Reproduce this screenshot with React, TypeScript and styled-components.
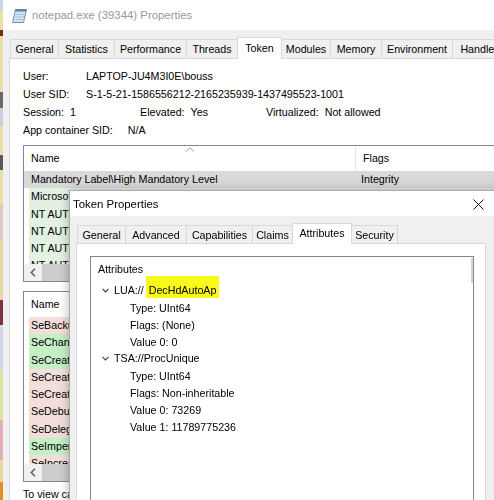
import React from "react";
import styled, { createGlobalStyle } from "styled-components";

const FONT = `"Liberation Sans", Arial, sans-serif`;

const Global = createGlobalStyle`
  html, body { margin: 0; padding: 0; }
  body {
    width: 494px;
    height: 500px;
    overflow: hidden;
    background: #f0f0f0;
    font-family: ${FONT};
  }
`;

const Screen = styled.div`
  position: relative;
  width: 494px;
  height: 500px;
  overflow: hidden;
  display: flex;
  font-family: ${FONT};
  font-size: 10.7px;
  color: #000;
`;

const DesktopStrip = styled.div`
  flex: none;
  width: 3px;
  background: linear-gradient(
    to bottom,
    #c8d8e8 0px, #c8d8e8 10px,
    #e8e0a8 10px, #e8e0a8 30px,
    #7a2a2a 30px, #7a2a2a 36px,
    #e8e0a8 36px, #e8e0a8 92px,
    #6a6a6a 92px, #6a6a6a 108px,
    #c8d0e0 108px, #c8d0e0 126px,
    #e8e0a8 126px, #e8e0a8 155px,
    #5a5a5a 155px, #5a5a5a 170px,
    #e8e0a8 170px, #e8e0a8 205px,
    #e2c4c4 205px, #e2c4c4 240px,
    #e8d8a8 240px, #e8d8a8 300px,
    #803040 300px, #803040 325px,
    #d0d8e8 325px, #d0d8e8 370px,
    #e0e0a0 370px, #e0e0a0 420px,
    #e0b0b8 420px, #e0b0b8 460px,
    #e8d8a0 460px, #e8d8a0 482px,
    #e09020 482px, #e09020 500px
  );
`;

const Window = styled.div`
  flex: none;
  width: 530px;
  display: flex;
  flex-direction: column;
  background: #f0f0f0;
`;

const TitleBar = styled.div`
  flex: none;
  height: 30px;
  background: #fff;
  display: flex;
  align-items: center;
  gap: 5px;
  padding-left: 8px;
`;

const TitleText = styled.span<{ $inactive?: boolean }>`
  font-size: 11.4px;
  color: ${(p) => (p.$inactive ? "#999999" : "#000000")};
  white-space: nowrap;
`;

const WindowBody = styled.div`
  flex: 1;
  display: flex;
  flex-direction: column;
  padding: 7px 0 0 6px;
`;

const TabStrip = styled.div`
  flex: none;
  display: flex;
  align-items: flex-end;
  padding-left: 1px;
`;

const Tab = styled.div<{ $w: number; $h: number; $active?: boolean }>`
  box-sizing: border-box;
  flex: none;
  position: relative;
  z-index: ${(p) => (p.$active ? 2 : 1)};
  width: ${(p) => p.$w}px;
  height: ${(p) => (p.$active ? p.$h + 3 : p.$h)}px;
  margin-right: -1px;
  margin-bottom: ${(p) => (p.$active ? -1 : 0)}px;
  padding-bottom: ${(p) => (p.$active ? 2 : 0)}px;
  border: 1px solid #d9d9d9;
  border-bottom: none;
  background: ${(p) => (p.$active ? "#ffffff" : "#f0f0f0")};
  display: flex;
  align-items: center;
  justify-content: center;
  white-space: nowrap;
`;

const TabPanel = styled.div`
  flex: 1;
  display: flex;
  flex-direction: column;
  background: #fff;
  border: 1px solid #d9d9d9;
  padding: 8px 13px 0 13px;
`;

const InfoRow = styled.div`
  display: flex;
  height: 18px;
  align-items: center;
  white-space: nowrap;
`;

const Field = styled.div<{ $w?: number }>`
  display: flex;
  gap: 6px;
  flex: none;
  width: ${(p) => (p.$w ? `${p.$w}px` : "auto")};
`;

const Label = styled.span<{ $w?: number }>`
  flex: none;
  width: ${(p) => (p.$w ? `${p.$w}px` : "auto")};
`;

const ListView = styled.div<{ $h: number; $mt: number }>`
  flex: none;
  box-sizing: border-box;
  height: ${(p) => p.$h}px;
  margin-top: ${(p) => p.$mt}px;
  border: 1px solid #828790;
  background: #fff;
  display: flex;
  flex-direction: column;
  overflow: hidden;
`;

const ListHeader = styled.div`
  flex: none;
  height: 25px;
  display: flex;
`;

const HeaderCell = styled.div<{ $w?: number }>`
  position: relative;
  flex: none;
  box-sizing: border-box;
  width: ${(p) => (p.$w ? `${p.$w}px` : "auto")};
  padding-left: 7px;
  line-height: 25px;
  border-right: ${(p) => (p.$w ? "1px solid #e5e5e5" : "none")};
`;

const SortArrow = styled.svg`
  position: absolute;
  top: 1px;
  left: 50%;
  transform: translateX(-50%);
`;

const ListBody = styled.div`
  flex: 1;
  overflow: hidden;
`;

const ListRow = styled.div<{ $bg: string; $sel?: boolean }>`
  height: 17.3px;
  line-height: 17.3px;
  display: flex;
  white-space: nowrap;
  margin-left: ${(p) => (p.$sel ? 0 : 5)}px;
  padding-left: ${(p) => (p.$sel ? 7 : 2)}px;
  background: ${(p) => p.$bg};
`;

const Cell = styled.div<{ $w?: number }>`
  flex: none;
  overflow: hidden;
  width: ${(p) => (p.$w ? `${p.$w}px` : "auto")};
  padding-left: ${(p) => (p.$w ? 0 : 6)}px;
`;

const HScroll = styled.div`
  flex: none;
  height: 17px;
  display: flex;
  background: #f0f0f0;
`;

const ScrollButton = styled.div`
  flex: none;
  width: 17px;
  display: flex;
  align-items: center;
  justify-content: center;
`;

const ScrollThumb = styled.div`
  flex: none;
  width: 220px;
  margin-left: 1px;
  background: #cdcdcd;
`;

const Hint = styled.div`
  margin-top: 6px;
  line-height: 12px;
  white-space: nowrap;
`;

const Dialog = styled.div`
  position: absolute;
  left: 69px;
  top: 190px;
  width: 440px;
  height: 330px;
  box-sizing: border-box;
  border: 1px solid #aaaaaa;
  background: #f0f0f0;
  box-shadow: 0 0 10px rgba(0, 0, 0, 0.28);
  display: flex;
  flex-direction: column;
  z-index: 5;
`;

const DialogTitle = styled.div`
  flex: none;
  height: 25px;
  background: #fff;
  display: flex;
  align-items: center;
  padding-left: 3px;
`;

const CloseButton = styled.svg`
  margin-left: auto;
  margin-right: 24px;
  margin-top: 1px;
`;

const DialogBody = styled.div`
  flex: 1;
  display: flex;
  flex-direction: column;
  padding: 7px 0 0 6px;
`;

const DialogPanel = styled.div`
  flex: 1;
  width: 410px;
  box-sizing: border-box;
  background: #fff;
  border: 1px solid #d9d9d9;
  padding: 12px 0 0 13px;
`;

const TreeBox = styled.div`
  position: relative;
  box-sizing: border-box;
  width: 384px;
  height: 280px;
  border: 1px solid #828790;
  background: #fff;
  padding: 4px 0 0 7px;
`;

const TreeScrollHint = styled.div`
  position: absolute;
  right: 0;
  top: 1px;
  width: 2px;
  height: 25px;
  background: #d4d4d4;
`;

const TreeHeader = styled.div`
  height: 17px;
  line-height: 17px;
  margin-bottom: 4px;
`;

const TreeItem = styled.div<{ $child?: boolean }>`
  height: 17px;
  display: flex;
  align-items: center;
  padding-left: ${(p) => (p.$child ? 32 : 4)}px;
  white-space: nowrap;
`;

const TreeLabel = styled.span`
  display: block;
  line-height: 17px;
`;

const Chevron = styled.svg`
  flex: none;
  margin-right: 5px;
`;

const Mark = styled.span`
  background: #f9f91c;
  mix-blend-mode: multiply;
  padding: 8px 3px 1.5px 3px;
  margin: 0 -3px 0 2px;
`;

const NotepadIcon = () => (
  <svg width="16" height="15" viewBox="0 0 16 15">
    <polygon points="4.5,1.5 15.5,1.5 12.5,14.5 1.5,14.5" fill="#d2e4f4" stroke="#6f8fb0" strokeWidth="1" />
    <polygon points="4.5,1.5 15.5,1.5 15,3.6 4,3.6" fill="#5b7fa5" />
    <line x1="5" y1="6.5" x2="13.4" y2="6.5" stroke="#9cb8d2" strokeWidth="0.8" />
    <line x1="4.3" y1="9" x2="12.8" y2="9" stroke="#9cb8d2" strokeWidth="0.8" />
    <line x1="3.7" y1="11.5" x2="12.2" y2="11.5" stroke="#9cb8d2" strokeWidth="0.8" />
  </svg>
);

const LeftArrow = () => (
  <svg width="6" height="9" viewBox="0 0 6 9">
    <polyline points="5,0.8 1.3,4.5 5,8.2" fill="none" stroke="#606060" strokeWidth="1.6" />
  </svg>
);

const TreeChevron = () => (
  <Chevron width="7" height="5" viewBox="0 0 7 5">
    <polyline points="0.5,0.8 3.5,3.8 6.5,0.8" fill="none" stroke="#404040" strokeWidth="1.2" />
  </Chevron>
);

const mainTabs: [string, number, boolean?][] = [
  ["General", 49],
  ["Statistics", 57],
  ["Performance", 73],
  ["Threads", 52],
  ["Token", 45, true],
  ["Modules", 50],
  ["Memory", 52],
  ["Environment", 72],
  ["Handles", 56],
];

const dialogTabs: [string, number, boolean?][] = [
  ["General", 49],
  ["Advanced", 62],
  ["Capabilities", 67],
  ["Claims", 41],
  ["Attributes", 60, true],
  ["Security", 47],
];

const GREEN_LIGHT = "#e2f1e2";
const GREEN = "#c6efc6";
const PINK = "#f2dfdb";

const groups: { name: string; flags: string; bg: string; sel?: boolean }[] = [
  { name: "Mandatory Label\\High Mandatory Level", flags: "Integrity", bg: "#d9d9d9", sel: true },
  { name: "Microsoft Account\\bouss", flags: "Mandatory", bg: GREEN_LIGHT },
  { name: "NT AUTHORITY\\Authenticated Users", flags: "Mandatory", bg: GREEN_LIGHT },
  { name: "NT AUTHORITY\\INTERACTIVE", flags: "Mandatory", bg: GREEN_LIGHT },
  { name: "NT AUTHORITY\\Local account", flags: "Mandatory", bg: GREEN_LIGHT },
  { name: "NT AUTHORITY\\LogonSessionId", flags: "Logon ID", bg: GREEN_LIGHT },
];

const privileges: { name: string; bg: string }[] = [
  { name: "SeBackupPrivilege", bg: PINK },
  { name: "SeChangeNotifyPrivilege", bg: GREEN },
  { name: "SeCreateGlobalPrivilege", bg: GREEN },
  { name: "SeCreatePagefilePrivilege", bg: PINK },
  { name: "SeCreateSymbolicLinkPrivilege", bg: PINK },
  { name: "SeDebugPrivilege", bg: PINK },
  { name: "SeDelegateSessionUserImpersonatePrivilege", bg: PINK },
  { name: "SeImpersonatePrivilege", bg: GREEN },
  { name: "SeIncreaseBasePriorityPrivilege", bg: PINK },
];

export default function App() {
  return (
    <>
      <Global />
      <Screen>
        <DesktopStrip />
        <Window>
          <TitleBar>
            <NotepadIcon />
            <TitleText $inactive>notepad.exe (39344) Properties</TitleText>
          </TitleBar>
          <WindowBody>
            <TabStrip>
              {mainTabs.map(([t, w, a]) => (
                <Tab key={t} $w={w} $h={19} $active={a}>
                  {t}
                </Tab>
              ))}
            </TabStrip>
            <TabPanel>
              <InfoRow>
                <Label $w={63}>User:</Label>
                <span>LAPTOP-JU4M3I0E\bouss</span>
              </InfoRow>
              <InfoRow>
                <Label $w={63}>User SID:</Label>
                <span>S-1-5-21-1586556212-2165235939-1437495523-1001</span>
              </InfoRow>
              <InfoRow>
                <Field $w={117}>
                  <Label>Session:</Label>
                  <span>1</span>
                </Field>
                <Field $w={126}>
                  <Label>Elevated:</Label>
                  <span>Yes</span>
                </Field>
                <Field>
                  <Label>Virtualized:</Label>
                  <span>Not allowed</span>
                </Field>
              </InfoRow>
              <InfoRow>
                <Label $w={104.7}>App container SID:</Label>
                <span>N/A</span>
              </InfoRow>

              <ListView $h={137} $mt={6}>
                <ListHeader>
                  <HeaderCell $w={332}>
                    Name
                    <SortArrow width="9" height="5" viewBox="0 0 9 5">
                      <polyline points="0.5,4.5 4.5,0.8 8.5,4.5" fill="none" stroke="#a0a0a0" strokeWidth="1" />
                    </SortArrow>
                  </HeaderCell>
                  <HeaderCell>Flags</HeaderCell>
                </ListHeader>
                <ListBody>
                  {groups.map((g) => (
                    <ListRow key={g.name} $bg={g.bg} $sel={g.sel}>
                      <Cell $w={324}>{g.name}</Cell>
                      <Cell>{g.flags}</Cell>
                    </ListRow>
                  ))}
                </ListBody>
                <HScroll>
                  <ScrollButton>
                    <LeftArrow />
                  </ScrollButton>
                  <ScrollThumb />
                </HScroll>
              </ListView>

              <ListView $h={191} $mt={9}>
                <ListHeader>
                  <HeaderCell $w={250}>Name</HeaderCell>
                  <HeaderCell>Status</HeaderCell>
                </ListHeader>
                <ListBody>
                  {privileges.map((p) => (
                    <ListRow key={p.name} $bg={p.bg}>
                      <Cell $w={243}>{p.name}</Cell>
                      <Cell>Disabled</Cell>
                    </ListRow>
                  ))}
                </ListBody>
                <HScroll>
                  <ScrollButton>
                    <LeftArrow />
                  </ScrollButton>
                  <ScrollThumb />
                </HScroll>
              </ListView>
              <Hint>To view capabilities, claims and other attributes, click Advanced.</Hint>
            </TabPanel>
          </WindowBody>
        </Window>

        <Dialog>
          <DialogTitle>
            <TitleText>Token Properties</TitleText>
            <CloseButton width="11" height="11" viewBox="0 0 11 11">
              <line x1="0.5" y1="0.5" x2="10.5" y2="10.5" stroke="#111" strokeWidth="1" />
              <line x1="10.5" y1="0.5" x2="0.5" y2="10.5" stroke="#111" strokeWidth="1" />
            </CloseButton>
          </DialogTitle>
          <DialogBody>
            <TabStrip>
              {dialogTabs.map(([t, w, a]) => (
                <Tab key={t} $w={w} $h={18} $active={a}>
                  {t}
                </Tab>
              ))}
            </TabStrip>
            <DialogPanel>
              <TreeBox>
                <TreeScrollHint />
                <TreeHeader>Attributes</TreeHeader>
                <TreeItem>
                  <TreeChevron />
                  <TreeLabel>
                    LUA://<Mark>DecHdAutoAp</Mark>
                  </TreeLabel>
                </TreeItem>
                <TreeItem $child>Type: UInt64</TreeItem>
                <TreeItem $child>Flags: (None)</TreeItem>
                <TreeItem $child>Value 0: 0</TreeItem>
                <TreeItem>
                  <TreeChevron />
                  <TreeLabel>TSA://ProcUnique</TreeLabel>
                </TreeItem>
                <TreeItem $child>Type: UInt64</TreeItem>
                <TreeItem $child>Flags: Non-inheritable</TreeItem>
                <TreeItem $child>Value 0: 73269</TreeItem>
                <TreeItem $child>Value 1: 11789775236</TreeItem>
              </TreeBox>
            </DialogPanel>
          </DialogBody>
        </Dialog>
      </Screen>
    </>
  );
}
